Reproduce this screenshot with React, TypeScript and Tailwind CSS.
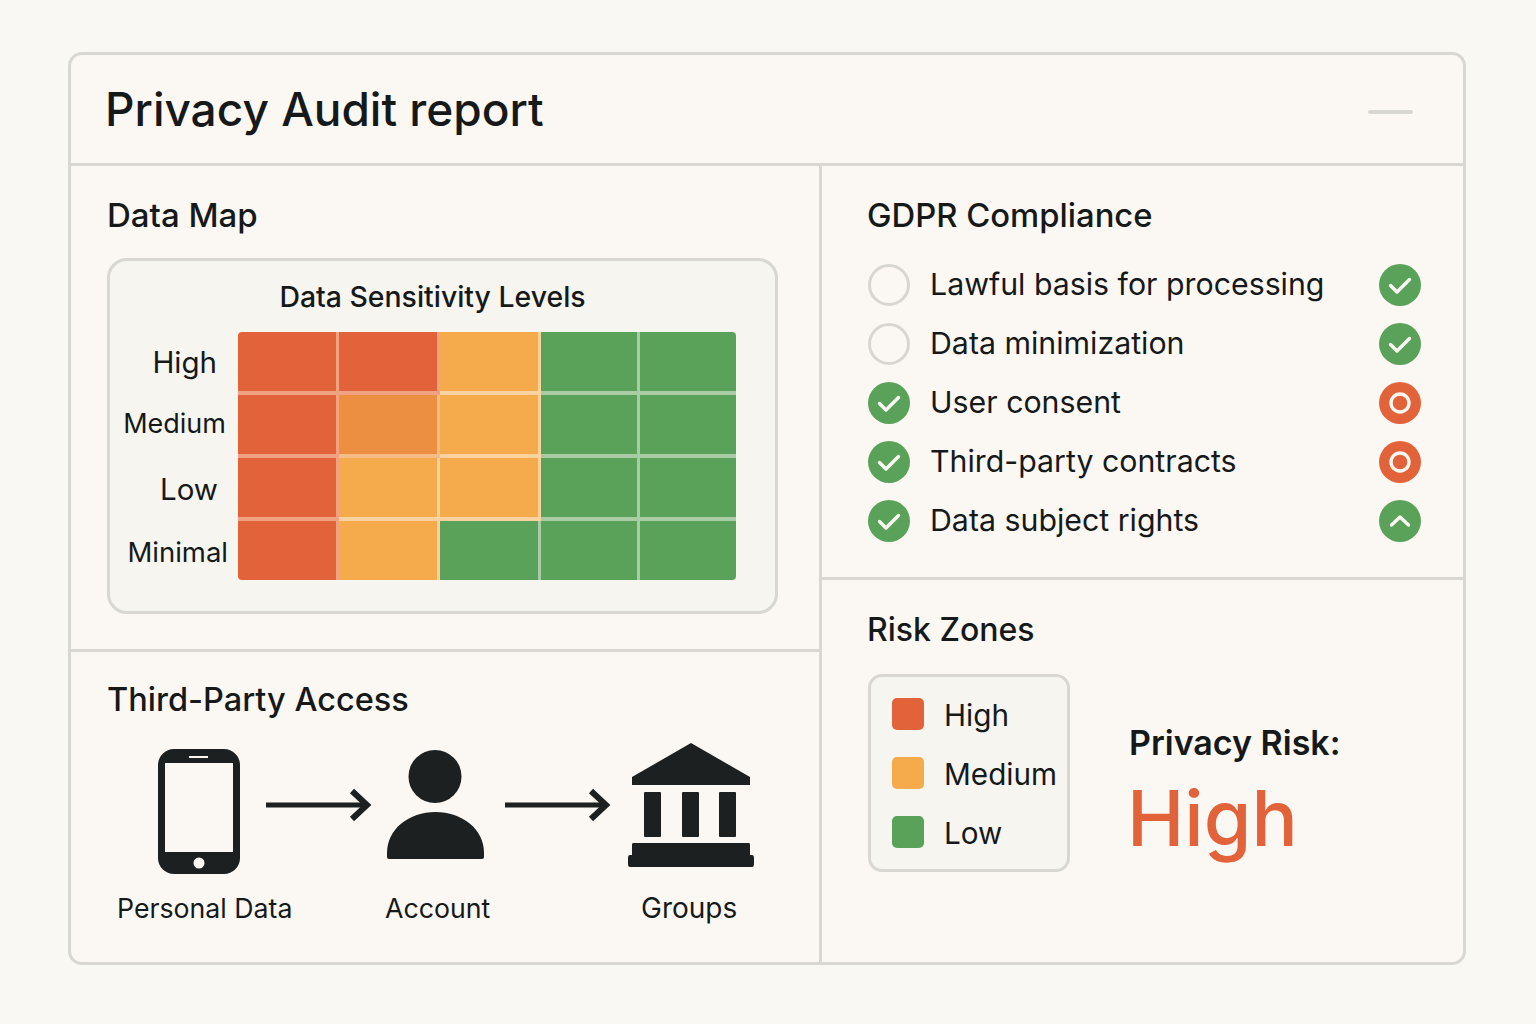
const INK = '#1d2021'

const R = 'bg-[#e2633a] border-[#f0a283]'
const M = 'bg-[#ed8f40] border-[#f5bc87]'
const O = 'bg-[#f5ab4b] border-[#fad29f]'
const G = 'bg-[#5aa259] border-[#a9cca6]'

const HEAT = [
  [R, R, O, G, G],
  [R, M, O, G, G],
  [R, O, O, G, G],
  [R, O, G, G, G],
]

const ROW_LABELS = [
  { label: 'High', className: 'h-[60px] pr-[21px] text-[29.500px]' },
  { label: 'Medium', className: 'h-[65px] pr-[12px] text-[27px]' },
  { label: 'Low', className: 'h-[64px] pr-[20px] text-[29.500px]' },
  { label: 'Minimal', className: 'h-[64px] pr-[10px] text-[27.500px]' },
]

const CHECKS = [
  { label: 'Lawful basis for processing', left: 'empty', right: 'check' },
  { label: 'Data minimization', left: 'empty', right: 'check' },
  { label: 'User consent', left: 'check', right: 'ring' },
  { label: 'Third-party contracts', left: 'check', right: 'ring' },
  { label: 'Data subject rights', left: 'check', right: 'up' },
]

const LEGEND = [
  { label: 'High', className: 'bg-[#e2633a]' },
  { label: 'Medium', className: 'bg-[#f5ab4b]' },
  { label: 'Low', className: 'bg-[#5aa259]' },
]

function StatusIcon({ kind }: { kind: string }) {
  if (kind === 'empty') {
    return <span className="block size-[42px] rounded-full border-[3px] border-[#d8d6d0] bg-[#fbf8f3]" />
  }
  return (
    <svg width="42" height="42" viewBox="0 0 42 42" className="shrink-0">
      <circle cx="21" cy="21" r="21" fill={kind === 'ring' ? '#e2633a' : '#5aa259'} />
      {kind === 'check' && (
        <path d="M11.5 21.5l6.5 6.5L30.500 15.500" fill="none" stroke="#fbf8f3" strokeWidth="3.4" strokeLinecap="round" strokeLinejoin="round" />
      )}
      {kind === 'ring' && <circle cx="21" cy="21" r="9" fill="none" stroke="#fbf8f3" strokeWidth="3.4" />}
      {kind === 'up' && (
        <path d="M12.5 25l8.5-8 8.5 8" fill="none" stroke="#fbf8f3" strokeWidth="3.4" strokeLinecap="round" strokeLinejoin="round" />
      )}
    </svg>
  )
}

function Arrow() {
  return (
    <svg width="106" height="34" viewBox="0 0 106 34" className="shrink-0">
      <path d="M0 17H102" stroke={INK} strokeWidth="5" fill="none" />
      <path d="M86 3l15 14-15 14" stroke={INK} strokeWidth="6" fill="none" />
    </svg>
  )
}

export default function App() {
  return (
    <div className="min-h-[1024px] bg-[#faf8f3] pt-[52px] pl-[68px] font-['Inter',sans-serif] text-[#16191a]">
      <div className="flex h-[913px] w-[1398px] flex-col rounded-[14px] border-[3px] border-[#d9d7d1] bg-[#fbf8f3]">
        <header className="flex h-[111px] shrink-0 items-center justify-between border-b-[3px] border-[#d9d7d1] pr-[50px] pl-[34px]">
          <h1 className="text-[46px] leading-[54px] font-[550]">Privacy Audit report</h1>
          <span className="mt-[6px] h-[4px] w-[45px] rounded-full bg-[#d9d7d1]" />
        </header>

        <div className="flex min-h-0 flex-1">
          <div className="flex w-[751px] shrink-0 flex-col border-r-[3px] border-[#d9d7d1]">
            <section className="h-[486px] shrink-0 border-b-[3px] border-[#d9d7d1] pt-[29px] pl-[36px]">
              <h2 className="text-[33px] leading-[40px] font-medium">Data Map</h2>
              <div className="mt-[23px] h-[356px] w-[671px] rounded-[20px] border-[3px] border-[#d9d7d1] bg-[#f7f5f0] pt-[16px]">
                <h3 className="pr-[20px] text-center text-[28.400px] leading-[40px] font-medium">Data Sensitivity Levels</h3>
                <div className="mt-[15px] flex">
                  <div className="w-[128px] shrink-0">
                    {ROW_LABELS.map((row) => (
                      <div key={row.label} className={`flex items-center justify-end ${row.className}`}>
                        {row.label}
                      </div>
                    ))}
                  </div>
                  <div className="grid h-[248px] w-[498px] grid-cols-[101px_101px_101px_99px_96px] grid-rows-[63px_63px_63px_59px] overflow-hidden rounded-[4px]">
                    {HEAT.flatMap((row, y) =>
                      row.map((cell, x) => (
                        <div
                          key={`${y}-${x}`}
                          className={`${cell} ${x < 4 ? 'border-r-[3px]' : ''} ${y < 3 ? 'border-b-[4px]' : ''}`}
                        />
                      )),
                    )}
                  </div>
                </div>
              </div>
            </section>

            <section className="flex-1 pt-[28px]">
              <h2 className="pl-[36px] text-[32.500px] leading-[40px] font-medium">Third-Party Access</h2>
              <div className="mt-[23px] flex h-[124px] items-start">
                <svg width="82" height="125" viewBox="0 0 82 125" className="mt-[6px] ml-[87px] shrink-0">
                  <rect width="82" height="125" rx="16" fill={INK} />
                  <rect x="7" y="14" width="68" height="89" fill="#fbf8f3" />
                  <rect x="31" y="7" width="19" height="2" fill="#fbf8f3" />
                  <circle cx="41" cy="114" r="5.500" fill="#fbf8f3" />
                </svg>
                <div className="mt-[45px] ml-[26px]">
                  <Arrow />
                </div>
                <svg width="97" height="110" viewBox="0 0 97 110" className="mt-[7px] ml-[15px] shrink-0">
                  <circle cx="48" cy="26.500" r="26.500" fill={INK} />
                  <path d="M0 103C0 79 22 62 48.500 62S97 79 97 103V107Q97 109 95 109H2Q0 109 0 107Z" fill={INK} />
                </svg>
                <div className="mt-[45px] ml-[21px]">
                  <Arrow />
                </div>
                <svg width="126" height="124" viewBox="0 0 126 124" className="ml-[17px] shrink-0">
                  <path d="M63 0L122 34V42H4V34Z" fill={INK} />
                  <rect x="16" y="49" width="17" height="45" rx="1" fill={INK} />
                  <rect x="54" y="49" width="17" height="45" rx="1" fill={INK} />
                  <rect x="91" y="49" width="17" height="45" rx="1" fill={INK} />
                  <path d="M5 100H121Q122 100 122 102V112H124Q126 112 126 115V121Q126 124 124 124H2Q0 124 0 121V115Q0 112 2 112H4V102Q4 100 5 100Z" fill={INK} />
                </svg>
              </div>
              <div className="mt-[21px] flex text-[26.700px] leading-[40px]">
                <span className="ml-[46px] w-[268px]">Personal Data</span>
                <span className="w-[256px]">Account</span>
                <span className="text-[28px]">Groups</span>
              </div>
            </section>
          </div>

          <div className="flex min-w-0 flex-1 flex-col">
            <section className="h-[414px] shrink-0 border-b-[3px] border-[#d9d7d1] pt-[29px] pr-[42px] pl-[45px]">
              <h2 className="text-[32.800px] leading-[40px] font-medium">GDPR Compliance</h2>
              <ul className="mt-[20px]">
                {CHECKS.map((item) => (
                  <li key={item.label} className="flex h-[59px] items-center">
                    <span className="ml-[1px]">
                      <StatusIcon kind={item.left} />
                    </span>
                    <span className="ml-[20px] text-[30.300px]">{item.label}</span>
                    <span className="ml-auto">
                      <StatusIcon kind={item.right} />
                    </span>
                  </li>
                ))}
              </ul>
            </section>

            <section className="flex-1 pt-[30px] pl-[45px]">
              <h2 className="text-[32px] leading-[40px] font-medium">Risk Zones</h2>
              <div className="mt-[24px] flex">
                <div className="ml-[1px] h-[198px] w-[202px] rounded-[14px] border-[3px] border-[#d9d7d1] bg-[#f7f5f0] pt-[21px] pl-[21px]">
                  {LEGEND.map((item) => (
                    <div key={item.label} className="flex h-[59px] items-start">
                      <span className={`size-[32px] rounded-[5px] ${item.className}`} />
                      <span className="mt-[1px] ml-[20px] text-[29.700px] leading-[32px]">{item.label}</span>
                    </div>
                  ))}
                </div>
                <div className="mt-[47px] ml-[59px]">
                  <p className="text-[34px] leading-[44px] font-semibold">Privacy Risk:</p>
                  <p className="mt-[8px] -ml-[2px] text-[77px] leading-[90px] font-[550] text-[#e2633a]">High</p>
                </div>
              </div>
            </section>
          </div>
        </div>
      </div>
    </div>
  )
}
